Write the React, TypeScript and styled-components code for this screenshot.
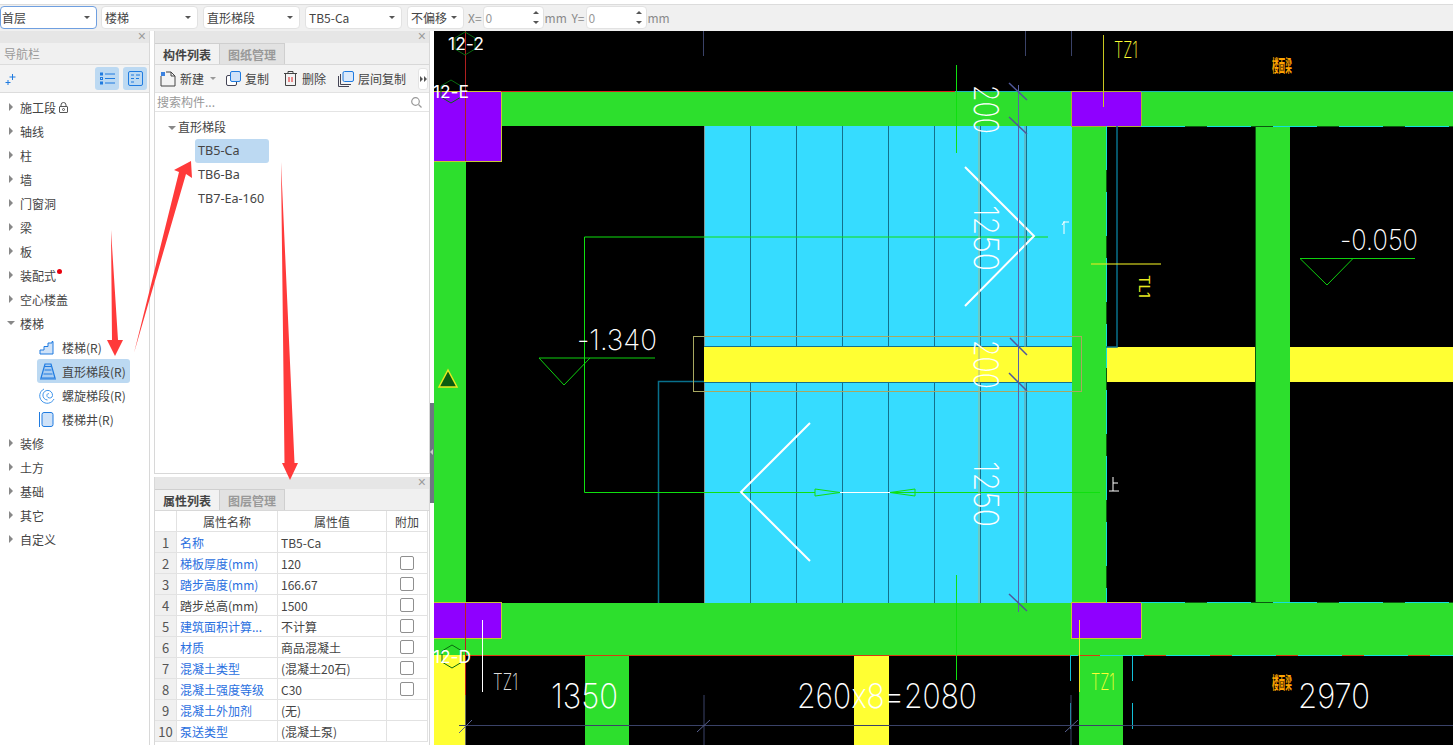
import React from "react";
import styled, { createGlobalStyle } from "styled-components";

const Global = createGlobalStyle`
  html, body { margin: 0; padding: 0; background: #fff; overflow: hidden; }
  body { font-family: "Noto Sans CJK SC", "Noto Sans", sans-serif; font-size: 12px; color: #333; }
  * { box-sizing: border-box; }
`;

const Page = styled.div`
  position: relative;
  width: 1453px;
  height: 745px;
  display: flex;
  flex-direction: column;
  overflow: hidden;
`;
const TopBar = styled.div`
  height: 27px;
  flex: none;
  margin-top: 4px;
  border-top: 1px solid #dcdcdc;
  background: #f0f0f0;
  display: flex;
  align-items: flex-start;
  padding-top: 1px;
`;
const Select = styled.div<{ $w: number; $focus?: boolean; $mr?: number }>`
  width: ${p => p.$w}px;
  height: 23px;
  margin-right: ${p => p.$mr ?? (p.$focus ? 4 : 5)}px;
  background: #fff;
  border: 1px solid ${p => (p.$focus ? "#6f9fe0" : "#e2e2e2")};
  border-radius: 4px;
  display: flex;
  align-items: center;
  justify-content: space-between;
  padding: 0 6px 0 ${p => (p.$focus ? 1 : 3)}px;
  font-size: 12px;
  color: #444;
  &::after {
    content: "";
    border-left: 3px solid transparent;
    border-right: 3px solid transparent;
    border-top: 3px solid #555;
  }
`;
const AxisLabel = styled.span<{ $ml?: number }>`
  color: #8a8a8a;
  font-size: 12px;
  line-height: 23px;
  white-space: nowrap;
  word-spacing: 2px;
  margin: 0 1px 0 ${p => p.$ml ?? 0}px;
`;
const NumberBox = styled.div`
  width: 61px;
  height: 23px;
  background: #fff;
  border: 1px solid #e2e2e2;
  border-radius: 4px;
  padding-left: 2px;
  color: #999;
  line-height: 21px;
  position: relative;
  &::before, &::after {
    content: "";
    position: absolute;
    right: 4px;
    border-left: 3px solid transparent;
    border-right: 3px solid transparent;
  }
  &::before { top: 4px; border-bottom: 3px solid #555; }
  &::after { bottom: 4px; border-top: 3px solid #555; }
`;
const Body = styled.div`
  flex: 1;
  display: flex;
  min-height: 0;
`;
const Nav = styled.div`
  width: 150px;
  flex: none;
  border-right: 1px solid #d8d8d8;
  display: flex;
  flex-direction: column;
`;
const DockHead = styled.div`
  height: 12px;
  flex: none;
  background: #e6e6e6;
  position: relative;
  &::after {
    content: "×";
    position: absolute;
    right: 3px;
    top: -3px;
    font: 14px/16px "Liberation Sans", sans-serif;
    color: #9a9a9a;
  }
`;
const NavTitle = styled.div`
  height: 22px;
  background: #f0f0f0;
  border-bottom: 1px solid #dcdcdc;
  color: #9a9a9a;
  padding: 2px 0 0 4px;
  font-size: 12px;
  line-height: 18px;
`;
const NavTools = styled.div`
  height: 28px;
  background: #f3f3f3;
  border-bottom: 1px solid #dcdcdc;
  display: flex;
  align-items: center;
  padding: 0 2px 0 5px;
  gap: 4px;
`;
const ToolBtn = styled.div<{ $first?: boolean }>`
  width: 24px;
  height: 23px;
  background: #bcd9f2;
  border-radius: 3px;
  display: flex;
  align-items: center;
  justify-content: center;
  margin-left: ${p => (p.$first ? "auto" : "0")};
`;
const Tree = styled.div`
  padding-top: 2px;
  background: #fff;
  flex: 1;
`;
const TreeRow = styled.div<{ $open?: boolean }>`
  height: 24px;
  display: flex;
  align-items: center;
  padding-left: 20px;
  position: relative;
  color: #444;
  font-size: 12px;
  &::before {
    content: "";
    position: absolute;
    left: 9px;
    top: ${p => (p.$open ? 10 : 8)}px;
    ${p =>
      p.$open
        ? "border-left:4px solid transparent;border-right:4px solid transparent;border-top:4px solid #888;left:7px;"
        : "border-top:4px solid transparent;border-bottom:4px solid transparent;border-left:4px solid #888;"}
  }
`;
const Dot = styled.span`
  width: 5px;
  height: 5px;
  border-radius: 50%;
  background: #e8000d;
  margin: -7px 0 0 1px;
`;
const SubRow = styled.div<{ $active?: boolean }>`
  height: 24px;
  margin-left: 37px;
  width: 93px;
  display: flex;
  align-items: center;
  padding-left: 2px;
  color: #444;
  font-size: 12px;
  white-space: nowrap;
  border-radius: 3px;
  background: ${p => (p.$active ? "#bcd9f2" : "transparent")};
`;
const SubIcon = styled.span`
  width: 23px;
  flex: none;
  display: flex;
  align-items: center;
`;
const MidGap = styled.div`
  width: 4px;
  flex: none;
`;
const Mid = styled.div`
  width: 276px;
  flex: none;
  display: flex;
  flex-direction: column;
`;
const Dock = styled.div<{ $h?: number }>`
  display: flex;
  flex-direction: column;
  border-left: 1px solid #d8d8d8;
  border-right: 1px solid #d8d8d8;
  ${p => (p.$h ? `height:${p.$h}px;flex:none;border-bottom:1px solid #d8d8d8;margin-bottom:3px;` : "flex:1;min-height:0;")}
`;
const Tabs = styled.div`
  height: 22px;
  flex: none;
  display: flex;
  background: #f0f0f0;
  border-bottom: 1px solid #d8d8d8;
`;
const Tab = styled.div<{ $on?: boolean }>`
  width: 65px;
  text-align: center;
  line-height: 21px;
  font-size: 12px;
  font-weight: 700;
  color: ${p => (p.$on ? "#444" : "#999")};
  background: ${p => (p.$on ? "#f2f2f2" : "#e2e2e2")};
  border-right: 1px solid #cfcfcf;
  border-top: 1px solid #cfcfcf;
`;
const ListTools = styled.div`
  height: 28px;
  flex: none;
  background: #f3f3f3;
  border-bottom: 1px solid #e2e2e2;
  display: flex;
  align-items: center;
  padding-left: 5px;
  color: #444;
`;
const ToolItem = styled.div<{ $w: number }>`
  width: ${p => p.$w}px;
  display: flex;
  align-items: center;
  gap: 4px;
  white-space: nowrap;
  font-size: 12px;
`;
const Caret = styled.span`
  border-left: 3px solid transparent;
  border-right: 3px solid transparent;
  border-top: 3px solid #999;
  margin-left: 2px;
`;
const More = styled.div`
  width: 10px;
  height: 22px;
  border: 1px solid #e4e4e4;
  border-radius: 3px;
  background: #fff;
  margin-left: auto;
  margin-right: 1px;
  display: flex;
  align-items: center;
  justify-content: center;
`;
const Search = styled.div`
  height: 19px;
  flex: none;
  background: #fff;
  border-bottom: 1px solid #e4e4e4;
  color: #999;
  font-size: 12px;
  line-height: 18px;
  padding-left: 2px;
  display: flex;
  justify-content: space-between;
  align-items: center;
  padding-right: 7px;
`;
const Comps = styled.div`
  flex: 1;
  background: #fff;
  padding-top: 3px;
  color: #444;
`;
const CompGroup = styled.div`
  height: 24px;
  line-height: 24px;
  padding-left: 23px;
  position: relative;
  &::before {
    content: "";
    position: absolute;
    left: 13px;
    top: 11px;
    border-left: 4px solid transparent;
    border-right: 4px solid transparent;
    border-top: 4px solid #888;
  }
`;
const CompRow = styled.div<{ $on?: boolean }>`
  height: 24px;
  line-height: 24px;
  margin-left: 40px;
  width: ${p => (p.$on ? "74px" : "auto")};
  padding-left: 3px;
  border-radius: 3px;
  background: ${p => (p.$on ? "#bcd9f2" : "transparent")};
  font-family: "Noto Sans", sans-serif;
  font-size: 12.6px;
`;
const PropTable = styled.div`
  display: grid;
  grid-template-columns: 22px 101px 109px 41px;
  grid-auto-rows: 21px;
  background: #fff;
  flex: 1;
  overflow: hidden;
  align-content: start;
`;
const Cell = styled.div<{ $blue?: boolean; $head?: boolean; $num?: boolean; $center?: boolean }>`
  border-right: 1px solid #e2e2e2;
  border-bottom: 1px solid #e2e2e2;
  padding: 0 ${p => (p.$num ? 0 : 3)}px;
  display: flex;
  align-items: center;
  justify-content: ${p => (p.$head || p.$num || p.$center ? "center" : "flex-start")};
  background: ${p => (p.$num ? "#f0f0f0" : "#fff")};
  color: ${p => (p.$blue ? "#2a6fe0" : p.$num ? "#555" : "#444")};
  font-size: ${p => (p.$num ? 13 : 12)}px;
  white-space: nowrap;
  overflow: hidden;
`;
const Check = styled.span`
  width: 14px;
  height: 14px;
  border: 1px solid #8f8f8f;
  border-radius: 2px;
  background: #fff;
`;
const Splitter = styled.div`
  width: 4px;
  flex: none;
  position: relative;
  background: #fff;
`;
const SplitGrip = styled.div`
  position: absolute;
  left: 0;
  top: 372px;
  width: 4px;
  height: 100px;
  background: #6d7780;
  &::after {
    content: "";
    position: absolute;
    left: 0;
    top: 46px;
    border-top: 3px solid transparent;
    border-bottom: 3px solid transparent;
    border-right: 3px solid #c8c8c8;
  }
`;
const Cad = styled.svg`
  flex: 1;
  display: block;
  height: 714px;
  background: #000;
`;
const Arrows = styled.svg`
  position: absolute;
  left: 0;
  top: 0;
  pointer-events: none;
`;
const CadText = styled.text<{ $soft?: boolean }>`
  font-family: "Inter", "Liberation Sans", "Noto Sans CJK SC", sans-serif;
  font-weight: ${p => (p.$soft ? 400 : 150)};
  font-feature-settings: "calt" 0;
`;
const BeamTag = styled.text`
  font-family: "Noto Sans CJK SC", sans-serif;
  font-weight: 700;
  font-size: 17px;
  fill: #ffa500;
`;

const tree1 = ["轴线", "柱", "墙", "门窗洞", "梁", "板"];
const tree2 = ["装修", "土方", "基础", "其它", "自定义"];
const props: [string, string, boolean, boolean][] = [
  ["名称", "TB5-Ca", true, false],
  ["梯板厚度(mm)", "120", true, true],
  ["踏步高度(mm)", "166.67", true, true],
  ["踏步总高(mm)", "1500", false, true],
  ["建筑面积计算...", "不计算", true, true],
  ["材质", "商品混凝土", true, true],
  ["混凝土类型", "(混凝土20石)", true, true],
  ["混凝土强度等级", "C30", true, true],
  ["混凝土外加剂", "(无)", true, false],
  ["泵送类型", "(混凝土泵)", true, false],
];

const B = "#1f7be0";
const StairIco = () => (
  <svg width="15" height="15" viewBox="0 0 15 15" fill="none">
    <path d="M1 14V10H5V6.500H9V3H13V1.500H14V14Z" fill="#cfe2f8" stroke={B} />
  </svg>
);
const FlightIco = () => (
  <svg width="18" height="17" viewBox="0 0 18 17" fill="none" stroke={B} strokeWidth="1.200">
    <path d="M6 1H12L16 15H2Z" fill="#a9cdf2" />
    <path d="M1 16H17M4.500 11H13.500M5.500 7H12.500M6 3.500H12" />
  </svg>
);
const SpiralIco = () => (
  <svg width="17" height="17" viewBox="0 0 17 17" fill="none" stroke="#3f94ea" strokeWidth="1">
    <path d="M5 2A7.500 7.500 0 1 0 15 12" />
    <path d="M8.500 13A4.800 4.800 0 1 1 13.500 8.500C13.500 11 10.500 11.500 9 10.500C7 9 8 6 10 6.800" />
  </svg>
);
const ShaftIco = () => (
  <svg width="15" height="15" viewBox="0 0 15 15" fill="none" stroke={B}>
    <path d="M.5 0V15" />
    <rect x="3" y=".5" width="11" height="14" rx="2" fill="#cfe2f8" />
  </svg>
);
const Lock = () => (
  <svg width="9" height="11" viewBox="0 0 9 11" fill="none" stroke="#555" style={{ marginLeft: 3 }}>
    <path d="M2 4.500V3A2.500 2.500 0 0 1 7 3V4.500" />
    <rect x=".5" y="4.500" width="8" height="6" rx=".5" />
    <circle cx="4.500" cy="7.500" r="1" />
  </svg>
);
const NewIco = () => (
  <svg width="16" height="16" viewBox="0 0 16 16" fill="none">
    <path d="M1 5V15H15V5L11 1H6" stroke="#444" />
    <path d="M11 1V5H15" stroke="#444" />
    <path d="M1 1H5V5H1Z" fill="#3b82e0" />
  </svg>
);
const CopyIco = () => (
  <svg width="15" height="15" viewBox="0 0 15 15" fill="none">
    <rect x=".5" y="4.500" width="10" height="10" rx="1.500" stroke="#445" fill="#fff" />
    <rect x="4.500" y=".5" width="10" height="10" rx="1.500" stroke={B} fill="#cfe2f8" />
  </svg>
);
const DelIco = () => (
  <svg width="15" height="15" viewBox="0 0 15 15" fill="none" stroke="#444">
    <path d="M1 2.500H14M5 2V.5H10V2M2.500 3V14.500H12.500V3" />
    <path d="M6 6V11M9 6V11" stroke="#e02020" />
  </svg>
);
const FloorCopyIco = () => (
  <svg width="16" height="16" viewBox="0 0 16 16" fill="none">
    <path d="M.5 5V15.500H11" stroke="#445" />
    <path d="M2.500 3V13.500H13" stroke="#445" />
    <rect x="5" y=".5" width="10.500" height="10" rx="1.500" stroke={B} fill="#dbe9fa" />
  </svg>
);

const Hex = ({ cx, cy }: { cx: number; cy: number }) => (
  <polygon
    points={`${cx},${cy - 11} ${cx + 10},${cy - 5} ${cx + 10},${cy + 6} ${cx},${cy + 12} ${cx - 10},${cy + 6} ${cx - 10},${cy - 5}`}
    fill="none"
    stroke="#0a6a10"
  />
);
const Txt = ({ x, y, w, size, color = "#fff", rot, soft, children }: { x: number; y: number; w: number; size: number; color?: string; rot?: boolean; soft?: boolean; children: string }) => (
  <CadText
    $soft={soft}
    x={x}
    y={y}
    fontSize={size}
    fill={color}
    textLength={w}
    lengthAdjust="spacingAndGlyphs"
    transform={rot ? `rotate(90 ${x} ${y})` : undefined}
  >
    {children}
  </CadText>
);

const stepX = [750, 796, 842, 888, 934, 980, 1026];

const CadDrawing = () => (
  <Cad viewBox="434 31 1019 714" preserveAspectRatio="none">
    {/* stair flights */}
    <rect x="704" y="126" width="368" height="477" fill="#36dcff" />
    {stepX.map(x => (
      <line key={x} x1={x + 0.5} y1="126" x2={x + 0.5} y2="603" stroke="#14708c" />
    ))}
    <line x1="704.500" y1="126" x2="704.500" y2="603" stroke="#7f9a9a" />
    {/* beams */}
    <rect x="704" y="347" width="368" height="35" fill="#ffff33" />
    <rect x="1106" y="347" width="347" height="35" fill="#ffff33" />
    <rect x="434" y="91" width="1019" height="35" fill="#2ddf2d" />
    <rect x="434" y="603" width="1019" height="52" fill="#2ddf2d" />
    <rect x="434" y="126" width="32" height="477" fill="#2ddf2d" />
    <rect x="1072" y="126" width="34" height="477" fill="#2ddf2d" />
    <rect x="1255" y="126" width="35" height="477" fill="#2ddf2d" />
    <rect x="585" y="655" width="44" height="90" fill="#2ddf2d" />
    <rect x="854" y="655" width="35" height="90" fill="#ffff33" />
    <rect x="434" y="655" width="32" height="90" fill="#ffff33" />
    <rect x="1079" y="655" width="44" height="90" fill="#2ddf2d" />
    {/* columns */}
    <rect x="433" y="91.500" width="68.500" height="70" fill="#8f00ff" stroke="#c8c832" />
    <rect x="433" y="602.500" width="68.500" height="36" fill="#8f00ff" stroke="#c8c832" />
    <rect x="1071.500" y="91.500" width="70" height="35" fill="#8f00ff" stroke="#b0b030" />
    <rect x="1071.500" y="602.500" width="70" height="36" fill="#8f00ff" stroke="#c8c832" />
    {/* edge lines */}
    <line x1="501" y1="91.500" x2="955" y2="91.500" stroke="#d82020" />
    <line x1="955" y1="91.500" x2="1071" y2="91.500" stroke="#20b0c0" />
    <line x1="1141" y1="91.500" x2="1453" y2="91.500" stroke="#20b0c0" />
    <line x1="465.500" y1="31" x2="465.500" y2="161" stroke="#b02020" />
    <line x1="465.500" y1="603" x2="465.500" y2="695" stroke="#c02020" />
    <line x1="465.500" y1="695" x2="465.500" y2="745" stroke="#6a6a5a" />
    <line x1="466" y1="655.500" x2="1453" y2="655.500" stroke="#d83a10" />
    <line x1="1070" y1="655.500" x2="1453" y2="655.500" stroke="#12e0e0" strokeDasharray="44 22" strokeDashoffset="-30" />
    <line x1="1141" y1="126.500" x2="1453" y2="126.500" stroke="#0a5a10" />
    <line x1="1141" y1="126.500" x2="1453" y2="126.500" stroke="#12e0e0" strokeDasharray="44 22" />
    <line x1="1141" y1="602.500" x2="1453" y2="602.500" stroke="#0a5a10" />
    <line x1="1141" y1="602.500" x2="1453" y2="602.500" stroke="#12e0e0" strokeDasharray="44 22" />
    <line x1="1106.500" y1="126" x2="1106.500" y2="603" stroke="#0a5a10" />
    <line x1="1106.500" y1="126" x2="1106.500" y2="603" stroke="#12e0e0" strokeDasharray="44 22" />
    <line x1="1255.500" y1="126" x2="1255.500" y2="603" stroke="#0a5a10" />
    <line x1="1070.500" y1="655" x2="1070.500" y2="745" stroke="#12c0d8" strokeDasharray="26 22" />
    <line x1="1132.500" y1="655" x2="1132.500" y2="745" stroke="#12c0d8" strokeDasharray="26 22" />
    <path d="M1117 126V347H1106" fill="none" stroke="#08708c" strokeWidth="1.500" />
    <path d="M658.500 603V381.500H704" fill="none" stroke="#08708c" strokeWidth="1.500" />
    <path d="M704 346.500H1072M704 382.500H1072" stroke="#14708c" />
    {/* green section lines */}
    <path d="M1048 237H584.500V492.500H815" fill="none" stroke="#0fe00f" />
    <path d="M890 492.500H1100" stroke="#0fe00f" />
    <path d="M840 492.500H890" stroke="#fff" />
    <path d="M815 489L840 492.500L815 496ZM915 489L890 492.500L915 496Z" fill="none" stroke="#0fe00f" />
    <path d="M956.500 65V153M956.500 575V680" stroke="#0fe00f" />
    {/* chevrons */}
    <path d="M965 167L1034 236L965 306" fill="none" stroke="#fff" strokeWidth="2" />
    <path d="M810 423L741 492L810 561" fill="none" stroke="#fff" strokeWidth="2" />
    {/* selection box */}
    <rect x="693.500" y="336.500" width="388" height="55" fill="none" stroke="#a8a860" />
    {/* dimension verticals */}
    <path d="M1018.500 85V612" stroke="#5a62a8" />
    <path d="M1025 126V347M1025 382V603" stroke="#7a9a9a" />
    <path d="M979 126V603" stroke="#a3b88a" />
    <path d="M1009 83L1027 100M1009 117L1027 134M1010 338L1027 355M1009 373L1027 391M1009 594L1027 611" stroke="#50589a" strokeWidth="1.500" />
    <path d="M1025.500 31V56M703.500 31V56M1071.500 31V56" stroke="#3a4268" />
    {/* bottom dimension */}
    <line x1="459" y1="725.500" x2="1453" y2="725.500" stroke="#3a4268" />
    <path d="M704 695V745M1071 695V745" stroke="#3a4268" />
    <path d="M459 733L472 720M697 732L710 720M1065 732L1078 720" stroke="#5a6290" />
    {/* level marks */}
    <path d="M655 358H539L564 385L590 358" fill="none" stroke="#0fd00f" />
    <path d="M1415 258.500H1300L1327 285L1353 258.500" fill="none" stroke="#0fd00f" />
    {/* leaders */}
    <path d="M1103.500 35V107" stroke="#c8c820" />
    <path d="M482.500 620V692" stroke="#fff" />
    <path d="M1079.500 620V692" stroke="#e8e820" />
    <path d="M1091 264H1161" stroke="#e8e820" strokeOpacity=".55" strokeWidth="2" />
    {/* warning */}
    <path d="M448 370L457 387H439Z" fill="#0a5a10" stroke="#e8e820" strokeWidth="1.500" />
    <Hex cx={465} cy={43} />
    <Hex cx={451} cy={91} />
    <Hex cx={452} cy={656} />
    {/* texts */}
    <Txt x={448} y={50} w={36} size={17} soft>12-2</Txt>
    <Txt x={433} y={98} w={36} size={17} soft>12-E</Txt>
    <Txt x={433} y={663} w={38} size={17} soft>12-D</Txt>
    <Txt x={1114} y={58} w={24} size={23} color="#ffff33">TZ1</Txt>
    <Txt x={493} y={690} w={25} size={23} color="#ddd">TZ1</Txt>
    <Txt x={1091} y={690} w={24} size={23} color="#ffff33">TZ1</Txt>
    <Txt x={551} y={708} w={67} size={34}>1350</Txt>
    <Txt x={797} y={708} w={180} size={34}>260x8=2080</Txt>
    <Txt x={1298} y={708} w={72} size={34}>2970</Txt>
    <Txt x={577} y={350} w={80} size={28}>-1.340</Txt>
    <Txt x={1340} y={250} w={78} size={28}>-0.050</Txt>
    <Txt x={974} y={85} w={49} size={34} rot>200</Txt>
    <Txt x={974} y={205} w={66} size={34} rot>1250</Txt>
    <Txt x={974} y={340} w={49} size={34} rot>200</Txt>
    <Txt x={974} y={461} w={66} size={34} rot>1250</Txt>
    <Txt x={1139} y={275} w={23} size={14} color="#e8e820" rot soft>TL1</Txt>
    <BeamTag transform="translate(1272 72) scale(.39 1)">楼面梁</BeamTag>
    <BeamTag transform="translate(1272 689) scale(.39 1)">楼面梁</BeamTag>
    <path d="M1064 221V234M1064 222L1062 225M1064 222L1069 222" stroke="#fff" fill="none" />
    <path d="M1113 477V491M1109 491H1119M1113 483H1118" stroke="#fff" fill="none" />
  </Cad>
);

export default function App() {
  return (
    <Page>
      <Global />
      <TopBar>
        <Select $w={97} $focus>首层</Select>
        <Select $w={97}>楼梯</Select>
        <Select $w={97}>直形梯段</Select>
        <Select $w={97}>TB5-Ca</Select>
        <Select $w={57} $mr={4}>不偏移</Select>
        <AxisLabel>X=</AxisLabel>
        <NumberBox>0</NumberBox>
        <AxisLabel $ml={1}>mm Y=</AxisLabel>
        <NumberBox>0</NumberBox>
        <AxisLabel $ml={1}>mm</AxisLabel>
      </TopBar>
      <Body>
        <Nav>
          <DockHead />
          <NavTitle>导航栏</NavTitle>
          <NavTools>
            <svg width="12" height="12" viewBox="0 0 12 12" stroke="#1f7be0" fill="none">
              <path d="M7.500 1V7M4.500 4H10.500M3 7V12M.5 9.500H5.500" />
            </svg>
            <ToolBtn $first>
              <svg width="15" height="13" viewBox="0 0 15 13" fill="none" stroke={B}>
                <rect x=".5" y="1" width="2" height="2" /><rect x=".5" y="5.500" width="2" height="2" /><rect x=".5" y="10" width="2" height="2" />
                <path d="M5 2H15M5 6.500H15M5 11H15" />
              </svg>
            </ToolBtn>
            <ToolBtn>
              <svg width="15" height="15" viewBox="0 0 15 15" fill="none" stroke={B}>
                <rect x=".5" y=".5" width="14" height="14" rx="1.500" />
                <path d="M3 4H6M8 4H12M3 7.500H6M8 7.500H11M3 11H6" />
              </svg>
            </ToolBtn>
          </NavTools>
          <Tree>
            <TreeRow>施工段<Lock /></TreeRow>
            {tree1.map(t => <TreeRow key={t}>{t}</TreeRow>)}
            <TreeRow>装配式<Dot /></TreeRow>
            <TreeRow>空心楼盖</TreeRow>
            <TreeRow $open>楼梯</TreeRow>
            <SubRow><SubIcon><StairIco /></SubIcon>楼梯(R)</SubRow>
            <SubRow $active><SubIcon><FlightIco /></SubIcon>直形梯段(R)</SubRow>
            <SubRow><SubIcon><SpiralIco /></SubIcon>螺旋梯段(R)</SubRow>
            <SubRow><SubIcon><ShaftIco /></SubIcon>楼梯井(R)</SubRow>
            {tree2.map(t => <TreeRow key={t}>{t}</TreeRow>)}
          </Tree>
        </Nav>
        <MidGap />
        <Mid>
          <Dock $h={443}>
            <DockHead />
            <Tabs>
              <Tab $on>构件列表</Tab>
              <Tab>图纸管理</Tab>
            </Tabs>
            <ListTools>
              <ToolItem $w={66}><NewIco />新建<Caret /></ToolItem>
              <ToolItem $w={57}><CopyIco />复制</ToolItem>
              <ToolItem $w={55}><DelIco />删除</ToolItem>
              <ToolItem $w={78}><FloorCopyIco />层间复制</ToolItem>
              <More>
                <svg width="7" height="6" viewBox="0 0 7 6" fill="#555"><path d="M0 0L3 3L0 6ZM4 0L7 3L4 6Z" /></svg>
              </More>
            </ListTools>
            <Search>
              搜索构件...
              <svg width="11" height="11" viewBox="0 0 11 11" fill="none" stroke="#999" strokeWidth="1.200">
                <circle cx="4.500" cy="4.500" r="3.800" /><path d="M7.500 7.500L10.500 10.500" />
              </svg>
            </Search>
            <Comps>
              <CompGroup>直形梯段</CompGroup>
              <CompRow $on>TB5-Ca</CompRow>
              <CompRow>TB6-Ba</CompRow>
              <CompRow>TB7-Ea-160</CompRow>
            </Comps>
          </Dock>
          <Dock>
            <DockHead />
            <Tabs>
              <Tab $on>属性列表</Tab>
              <Tab>图层管理</Tab>
            </Tabs>
            <PropTable>
              <Cell $head />
              <Cell $head>属性名称</Cell>
              <Cell $head>属性值</Cell>
              <Cell $head>附加</Cell>
              {props.map(([n, v, blue, chk], i) => (
                <React.Fragment key={n}>
                  <Cell $num>{i + 1}</Cell>
                  <Cell $blue={blue}>{n}</Cell>
                  <Cell>{v}</Cell>
                  <Cell $center>{chk && <Check />}</Cell>
                </React.Fragment>
              ))}
            </PropTable>
          </Dock>
        </Mid>
        <Splitter><SplitGrip /></Splitter>
        <CadDrawing />
      </Body>
      <Arrows width="1453" height="745" viewBox="0 0 1453 745">
        <path d="M111 230L112 340H107L115 356L123 340H118Z" fill="#ff3a3a" />
        <path d="M134 353L179 172L174 170L191 161L192 178L186 174Z" fill="#ff3a3a" />
        <path d="M281 162L284.500 463H282L290 480L298 463H294.500Z" fill="#ff3a3a" />
      </Arrows>
    </Page>
  );
}
